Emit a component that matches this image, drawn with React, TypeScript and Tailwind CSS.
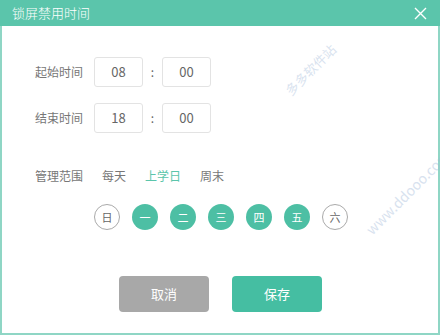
const days = [
  { d: "日", on: false },
  { d: "一", on: true },
  { d: "二", on: true },
  { d: "三", on: true },
  { d: "四", on: true },
  { d: "五", on: true },
  { d: "六", on: false },
];

function TimeRow({ label, h, m }: { label: string; h: string; m: string }) {
  return (
    <div className="flex items-center">
      <span className="w-[59px] text-[12px] text-[#777]">{label}</span>
      <div className="w-[49px] h-[30px] border border-[#e3e3e3] rounded-[3px] flex items-center justify-center text-[13px] text-[#666]">
        {h}
      </div>
      <span className="w-[19px] text-center text-[12px] text-[#666]">:</span>
      <div className="w-[49px] h-[30px] border border-[#e3e3e3] rounded-[3px] flex items-center justify-center text-[13px] text-[#666]">
        {m}
      </div>
    </div>
  );
}

export default function App() {
  return (
    <div
      className="w-[440px] h-[335px] flex flex-col bg-white relative overflow-hidden"
      style={{ fontFamily: '"Noto Sans CJK SC", "Noto Sans", sans-serif' }}
    >
      {/* title bar */}
      <div className="h-[26px] bg-[#5bc5ab] flex items-center justify-between pl-[12px] pr-[13px]">
        <span className="text-white text-[13px] font-light">锁屏禁用时间</span>
        <svg width="13" height="13" viewBox="0 0 13 13" stroke="white" strokeWidth="1.4" fill="none">
          <path d="M1 1L12 12M12 1L1 12" />
        </svg>
      </div>

      <div className="flex-1 border-x-2 border-b-2 border-[#8fd6c5] flex flex-col pl-[33px]">
        <div className="mt-[31px] flex flex-col gap-[16px]">
          <TimeRow label="起始时间" h="08" m="00" />
          <TimeRow label="结束时间" h="18" m="00" />
        </div>

        <div className="mt-[34px] flex items-center gap-[19px] text-[12px] text-[#777]">
          <span>管理范围</span>
          <span>每天</span>
          <span className="text-[#5bc5ab]">上学日</span>
          <span>周末</span>
        </div>

        <div className="mt-[19px] ml-[59px] flex gap-[12px]">
          {days.map((x) => (
            <div
              key={x.d}
              className={
                x.on
                  ? "w-[26px] h-[26px] rounded-full bg-[#4dbfa4] text-white text-[11px] flex items-center justify-center"
                  : "w-[26px] h-[26px] rounded-full border border-[#aaa] text-[#666] text-[11px] flex items-center justify-center"
              }
            >
              {x.d}
            </div>
          ))}
        </div>

        <div className="mt-[46px] ml-[84px] flex gap-[23px]">
          <button className="w-[90px] h-[36px] rounded-[4px] bg-[#a8a8a8] text-white text-[13px]">取消</button>
          <button className="w-[90px] h-[36px] rounded-[4px] bg-[#45bea2] text-white text-[13px]">保存</button>
        </div>
      </div>

      {/* watermark */}
      <div className="absolute left-[278px] top-[60px] -rotate-45 text-[13px] text-[#9fb8d8] opacity-40 pointer-events-none">多多软件站</div>
      <div className="absolute left-[352px] top-[182px] -rotate-45 text-[14px] text-[#9fb8d8] opacity-40 pointer-events-none">www.ddooo.com</div>
    </div>
  );
}
